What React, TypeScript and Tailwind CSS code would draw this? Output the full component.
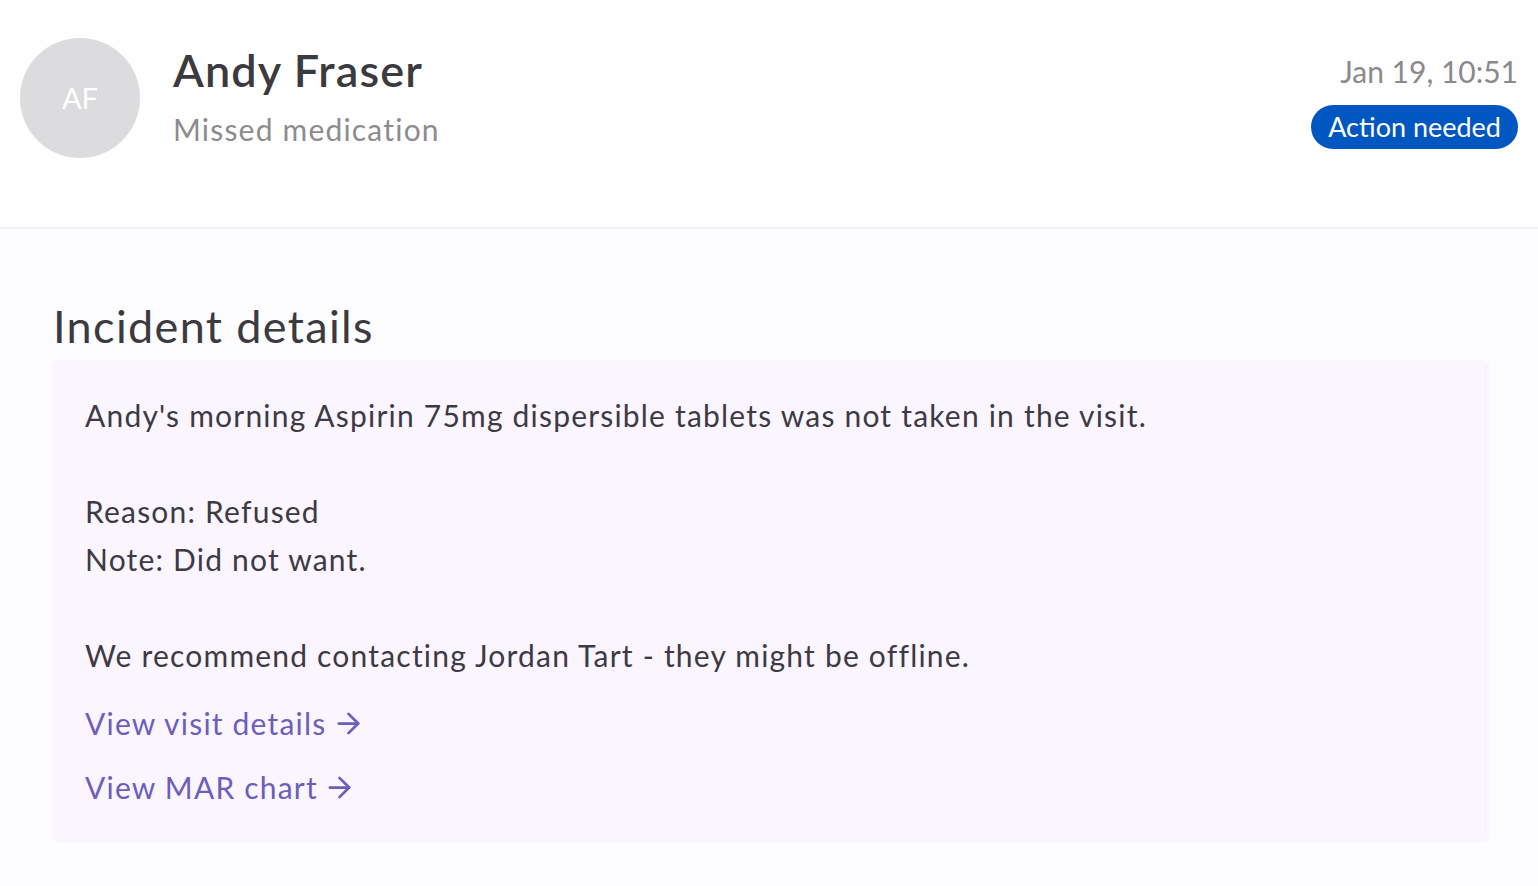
import { ArrowRight } from "lucide-react";

const FONT = { fontFamily: "Lato, 'Noto Sans', sans-serif" };

export default function App() {
  return (
    <div className="min-h-[886px] w-full bg-[#fdfcfe] text-[#3d3a45]" style={FONT}>
      {/* ── Header ── */}
      <header className="flex h-[229px] items-start justify-between border-b-2 border-[#f3f1f6] bg-[#fefefe] pl-5 pr-5 pt-[38px]">
        <div className="flex items-start gap-[33px]">
          <div className="flex h-[120px] w-[120px] items-center justify-center rounded-full bg-[#dcdbdd] text-[29px] text-white">
            AF
          </div>
          <div className="flex flex-col pt-[3px]">
            <h1 className="text-[45px] font-semibold leading-[58px] tracking-[0.025em] text-[#3b3a3e]">Andy Fraser</h1>
            <p className="mt-[10px] text-[30px] leading-[40px] tracking-[0.04em] text-[#8c8b8f]">Missed medication</p>
          </div>
        </div>
        <div className="flex flex-col items-end gap-[14px] pt-[13px]">
          <span className="text-[30px] leading-[40px] text-[#8a898d]">Jan 19, 10:51</span>
          <span className="rounded-full bg-[#0057c2] px-[17px] text-[27px] leading-[44px] text-white">
            Action needed
          </span>
        </div>
      </header>

      {/* ── Incident details ── */}
      <section className="pl-[52px] pr-[53px] pt-[69px]">
        <h2 className="mb-[8px] pl-px text-[45px] leading-[56px] tracking-[0.03em] text-[#3b3a3e]">Incident details</h2>
        <div className="bg-[#faf5fe] pb-[29px] pl-[33px] pr-8 pt-[29px] text-[30px] leading-[48px] tracking-[0.04em] shadow-[2px_0_4px_rgba(240,230,250,0.6)]">
          <p>Andy's morning Aspirin 75mg dispersible tablets was not taken in the visit.</p>
          <p>&nbsp;</p>
          <p>Reason: Refused</p>
          <p>Note: Did not want.</p>
          <p>&nbsp;</p>
          <p>We recommend contacting Jordan Tart - they might be offline.</p>
          <div className="mt-[20px] flex flex-col gap-4 text-[#6c5fbc]">
            <a className="flex items-center gap-[5px]">
              View visit details <ArrowRight size={33} strokeWidth={2} />
            </a>
            <a className="flex items-center gap-[5px]">
              View MAR chart <ArrowRight size={33} strokeWidth={2} />
            </a>
          </div>
        </div>
      </section>
    </div>
  );
}
